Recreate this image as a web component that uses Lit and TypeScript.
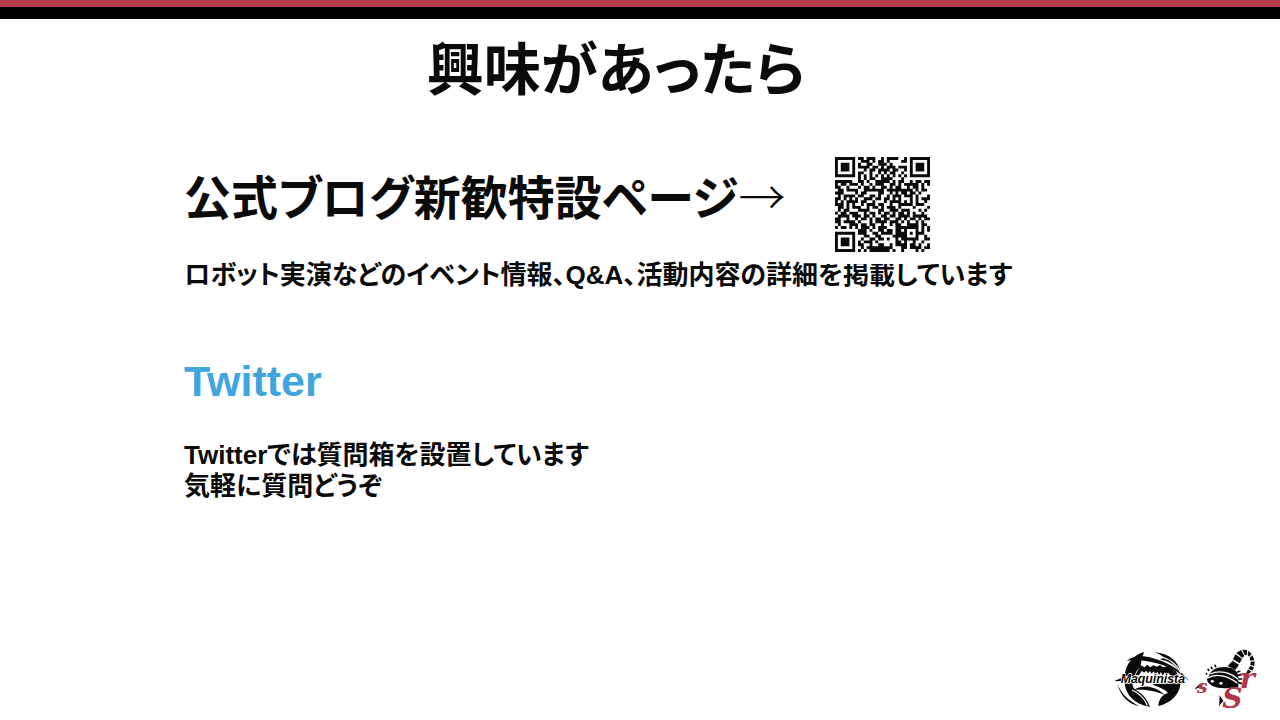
import { LitElement, html, css, svg } from "lit";
import { customElement } from "lit/decorators.js";

const QR_ROWS = [
  "111111101101110010111100100011111",
  "100000100111010110100001101000001",
  "101110101001100111010000001011101",
  "101110101111011010111011101011101",
  "101110100010110111101100101011101",
  "100000101100100101011001001000001",
  "111111101010101010101010101111111",
  "000000001010110011110001000000000",
  "111111001101001111101011001011011",
  "101101110100101110011010111110101",
  "110010001011010011010110010110100",
  "011011110011111110111111111010110",
  "111000010110000110010101101101000",
  "010111101100110100101110111010001",
  "110101010011101101101010001010111",
  "101011110110010001011110101010010",
  "111010100101110110010011111011100",
  "011010111001011010111010000100001",
  "010110001111000110011101110001010",
  "101101110010110101101011010100100",
  "011110111011010011011011110111110",
  "110010010110101101100110101101011",
  "110111101000101111011101010010100",
  "010001110110110010010110011110110",
  "101101010111010111000111111110101",
  "000000001110100110110110100010101",
  "111111101110011011110111101011100",
  "100000100011001100001111100010010",
  "101110100100110110100101111110011",
  "101110101011101000000110100100100",
  "101110101100100110010111101101001",
  "100000100101111111110001101111011",
  "111111101010111111101001000010100",
].map((row, y, rows) => {
  const n = rows.length;
  const finder = (cx: number, cy: number) => {
    const d = Math.max(Math.abs(cx), Math.abs(cy));
    return d === 2 || d === 4 ? "0" : "1";
  };
  return [...row]
    .map((m, x) => {
      if (x < 8 && y < 8) return finder(x - 3, y - 3);
      if (x >= n - 8 && y < 8) return finder(x - n + 4, y - 3);
      if (x < 8 && y >= n - 8) return finder(x - 3, y - n + 4);
      const d = Math.max(Math.abs(x - 26), Math.abs(y - 26));
      return d <= 2 ? (d === 1 ? "0" : "1") : m;
    })
    .join("");
});

@customElement("qr-code")
export class QrCode extends LitElement {
  static styles = css`
    :host { display: block; background: #fff; }
    .code { display: block; width: 100%; height: auto; }
  `;
  render() {
    const d = QR_ROWS.map((row, y) =>
      [...row].map((m, x) => (m === "1" ? `M${x} ${y}h1v1h-1z` : "")).join("")
    ).join("");
    return html`<svg class="code" viewBox="0 0 33 33" role="img" aria-label="QR">
      <path d=${d} fill="#0a0a0a"></path>
    </svg>`;
  }
}

const maquinista = svg`
  <g fill="#0a0a0a">
    <path d="M103 36C72 44 46 70 44 108H74C76 96 84 88 92 78C94 64 96 48 103 36Z"/>
    <path d="M50 62C70 46 100 46 124 53C172 66 212 88 238 124C204 92 168 74 124 66C96 60 70 58 50 62Z"/>
    <path d="M134 37C176 40 206 62 213 102C200 78 180 64 150 58L162 53C154 46 146 41 134 37Z"/>
    <path d="M84 90L92 76L104 82L112 74L120 82L130 76L140 80L150 75L160 82L172 78L196 92L208 108H182L176 98L170 107L164 97L158 107L153 96L147 105L142 95L136 103L131 94L125 101L120 93L114 100L109 92L102 98L96 92L86 106H76Z"/>
    <path d="M13 123L40 112V122L22 124Z"/>
    <path d="M44 130H68C66 142 74 150 90 158C104 168 113 182 120 200C84 196 48 172 44 130Z"/>
    <path d="M22 132C34 160 54 182 88 198C58 194 32 170 22 132Z"/>
    <path d="M72 150C92 134 132 134 166 166C132 150 100 148 72 150Z"/>
    <path d="M212 130C208 164 184 190 145 198C146 184 150 174 162 164L174 158C164 148 148 142 132 136L128 132Z"/>
  </g>
  <path d="M66 150C88 160 104 176 112 196M150 49C184 58 204 78 213 100" fill="none" stroke="#fff" stroke-width="4"/>
  <text x="32" y="130" font-family="Liberation Sans, Arial, sans-serif" font-size="37" font-weight="700" font-style="italic" fill="#0a0a0a" stroke="#fff" stroke-width="4" stroke-linejoin="round" paint-order="stroke">Maquinista</text>
`;

const scorpion = svg`
  <g fill="#0a0a0a">
    <path d="M72 108C76 90 96 80 122 81C146 83 160 94 160 112V142L122 145C96 146 66 136 66 118Z"/>
    <path d="M128 78L143 62L162 74L151 90Z"/>
    <path d="M144 58L151 43L171 56L164 70Z"/>
    <path d="M154 39L168 30L178 47L172 54Z"/>
    <path d="M172 29L186 30L186 44L180 46Z"/>
    <path d="M190 32L200 42L192 50L188 45Z"/>
    <path d="M202 46L208 60L196 62L194 53Z"/>
    <path d="M209 64L208 78L196 75L197 65Z"/>
    <path d="M207 82L202 92L191 86L195 78Z"/>
    <path d="M189 88L199 95L179 110Z"/>
    <path d="M28 151C34 138 44 132 56 132L46 140L36 145Z"/>
    <path d="M104 166L115 183L106 193L102 200Z"/>
  </g>
  <path d="M68 114C92 98 130 108 158 130M76 102C104 88 136 98 160 118" fill="none" stroke="#fff" stroke-width="4"/>
  <ellipse cx="82" cy="124" rx="5" ry="4" fill="#fff"/>
  <ellipse cx="108" cy="130" rx="5" ry="4" fill="#fff"/>
  <path d="M65 102L64 101M71 91L69 88M81 86L79 82M92 80L90 76M158 96L164 94M160 106L168 104M161 117L170 117M160 128L169 130" fill="none" stroke="#0a0a0a" stroke-width="5" stroke-linecap="round"/>
  <g font-family="DejaVu Serif, serif" font-style="italic" fill="#b03548">
    <text x="36" y="160" font-size="56">s</text>
    <text x="112" y="204" font-size="84" font-weight="700">S</text>
    <text x="164" y="144" font-size="86">r</text>
  </g>
`;

@customElement("app-root")
export class AppRoot extends LitElement {
  static styles = css`
    :host {
      display: flex;
      flex-direction: column;
      min-height: 100vh;
      box-sizing: border-box;
      background: #fff;
      color: #0a0a0a;
      font-family: "Liberation Sans", "Noto Sans CJK JP", sans-serif;
      font-weight: 700;
      font-feature-settings: "palt";
    }
    .band { height: 12px; border-top: 7px solid #b03c4c; background: #000; }
    .title { margin: 15px 0 0; padding-right: 48px; text-align: center; font-size: 57px; line-height: 72px; }
    .content { flex: 1; padding: 57px 184px 0; }
    .lead { display: flex; align-items: center; position: relative; width: fit-content; }
    .heading { margin: 0; font-size: 47px; line-height: 64px; }
    .arrow { font-family: "Noto Sans CJK JP", sans-serif; font-weight: 300; font-feature-settings: normal; }
    .qr { position: absolute; left: 100%; top: -18px; width: 95px; margin-left: 38px; margin-top: 0; padding: 12px; z-index: 1; }
    .text { margin: 0; font-size: 26px; line-height: 31px; }
    .lead + .text { margin-top: 29px; }
    .twitter { margin: 60px 0 0; font-size: 43px; line-height: 60px; }
    .link { color: #3fa5de; text-decoration: none; }
    .twitter + .text { margin-top: 29px; }
    .logos { display: flex; justify-content: flex-end; gap: 3px; padding: 0 22px 5px; }
    .logo { display: block; }
  `;
  render() {
    return html`
      <div class="band"></div>
      <h1 class="title">興味があったら</h1>
      <main class="content">
        <div class="lead">
          <h2 class="heading">公式ブログ新歓特設ページ<span class="arrow">→</span></h2>
          <qr-code class="qr"></qr-code>
        </div>
        <p class="text">ロボット実演などのイベント情報、Q&amp;A、活動内容の詳細を掲載しています</p>
        <h2 class="twitter"><a class="link" href="#twitter">Twitter</a></h2>
        <p class="text">Twitterでは質問箱を設置しています<br />気軽に質問どうぞ</p>
      </main>
      <footer class="logos">
        <svg class="logo" width="78" height="66" viewBox="12 27 234 198" role="img" aria-label="Maquinista">${maquinista}</svg>
        <svg class="logo" width="63" height="66" viewBox="30 27 189 198" role="img" aria-label="SrS">${scorpion}</svg>
      </footer>
    `;
  }
}
